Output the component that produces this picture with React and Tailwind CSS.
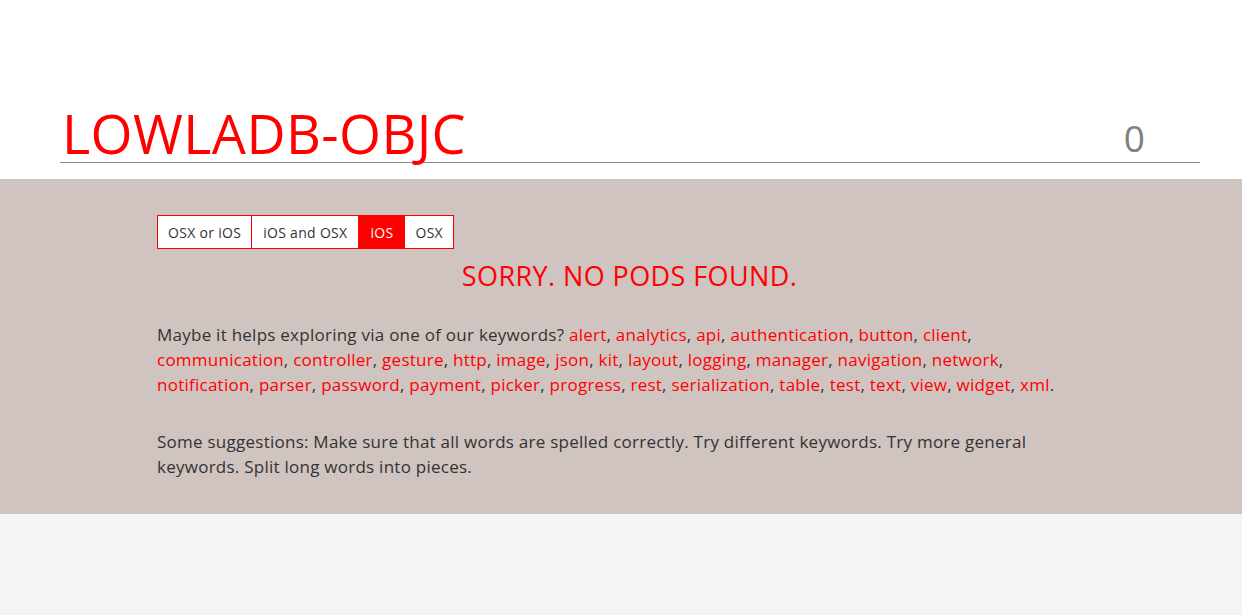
import React from "react";

const keywords = [
  ["alert", "analytics", "api", "authentication", "button", "client"],
  ["communication", "controller", "gesture", "http", "image", "json", "kit", "layout", "logging", "manager", "navigation", "network"],
  ["notification", "parser", "password", "payment", "picker", "progress", "rest", "serialization", "table", "test", "text", "view", "widget", "xml"],
];

const platforms = [
  { label: "OSX or iOS", cls: "px-[10px] text-[#333] border-r border-[#ff0000]" },
  { label: "iOS and OSX", cls: "px-[11px] text-[#333]" },
  { label: "iOS", cls: "px-[12px] bg-[#ff0000] text-white" },
  { label: "OSX", cls: "px-[10px] text-[#333]" },
];

export default function App() {
  return (
    <div className="min-h-[615px] bg-[#f4f4f4] font-['Open_Sans',sans-serif]">
      <header className="bg-white pt-[104px] pb-4 pl-[60px] pr-[42px]">
        <div className="flex items-end justify-between border-b border-[#888]">
          <h1 className="pl-[2px] text-[54px] leading-[58px] text-[#ff0000] tracking-[0.4px]">LOWLADB-OBJC</h1>
          <span className="pr-[55px] text-[37px] leading-[48px] text-[#808080]">0</span>
        </div>
      </header>

      <main className="bg-[#d0c4c0] pt-9 pb-[35px]">
        <div className="ml-[157px] w-[945px] text-[17px] tracking-[0.25px] text-[#333]">
          <div className="flex w-fit border border-[#ff0000] bg-white">
            {platforms.map((p) => (
              <button key={p.label} className={`h-8 text-[14px] tracking-[0.3px] ${p.cls}`}>
                {p.label}
              </button>
            ))}
          </div>

          <h2 className="mt-2 text-center text-[27px] leading-[38px] tracking-[0.4px] text-[#ff0000]">SORRY. NO PODS FOUND.</h2>

          <p className="mt-[27px] leading-[25px]">
            Maybe it helps exploring via one of our keywords?{" "}
            {keywords.map((row, r) => (
              <React.Fragment key={r}>
                {row.map((k, i) => (
                  <React.Fragment key={k}>
                    <a className="text-[#ff0000]" href="#">{k}</a>
                    {r === 2 && i === row.length - 1 ? "." : ", "}
                  </React.Fragment>
                ))}
                {r < 2 && <br />}
              </React.Fragment>
            ))}
          </p>

          <p className="mt-[32px] leading-[25px]">
            Some suggestions: Make sure that all words are spelled correctly. Try different keywords. Try more general
            <br />
            keywords. Split long words into pieces.
          </p>
        </div>
      </main>
    </div>
  );
}
